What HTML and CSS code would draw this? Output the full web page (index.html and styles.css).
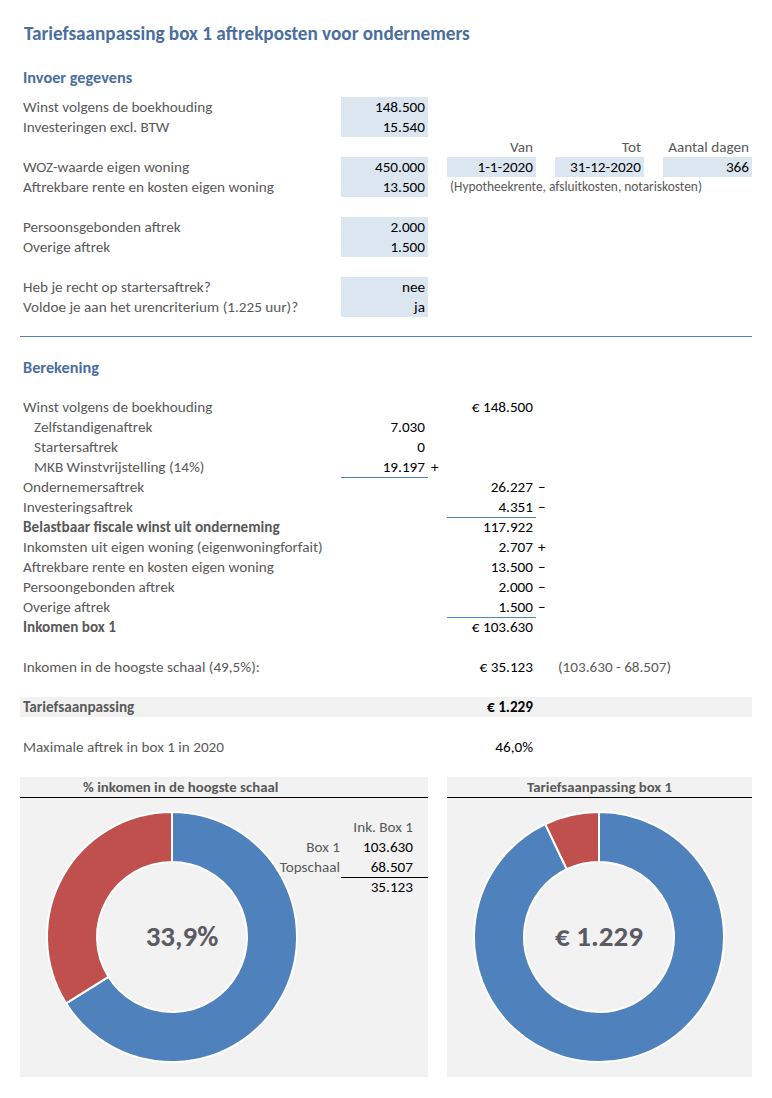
FILE: index.html
```html
<!DOCTYPE html>
<html lang="nl">
<head>
<meta charset="utf-8">
<title>Tariefsaanpassing box 1</title>
<link rel="stylesheet" href="styles.css">
</head>
<body>
<div class="sheet">
  <h1 class="title">Tariefsaanpassing box 1 aftrekposten voor ondernemers</h1>
  <div class="row head first"><div class="b">Invoer gegevens</div></div>
  <div class="rows">
    <div class="row"><div class="b">Winst volgens de boekhouding</div><div class="c num in">148.500</div></div>
    <div class="row"><div class="b">Investeringen excl. BTW</div><div class="c num in">15.540</div></div>
    <div class="row"><div class="e num muted">Van</div><div class="g num muted">Tot</div><div class="i num muted">Aantal dagen</div></div>
    <div class="row"><div class="b">WOZ-waarde eigen woning</div><div class="c num in">450.000</div><div class="e num in">1-1-2020</div><div class="g num in">31-12-2020</div><div class="i num in">366</div></div>
    <div class="row"><div class="b">Aftrekbare rente en kosten eigen woning</div><div class="c num in">13.500</div><div class="e-i small">(Hypotheekrente, afsluitkosten, notariskosten)</div></div>
    <div class="row"></div>
    <div class="row"><div class="b">Persoonsgebonden aftrek</div><div class="c num in">2.000</div></div>
    <div class="row"><div class="b">Overige aftrek</div><div class="c num in">1.500</div></div>
    <div class="row"></div>
    <div class="row"><div class="b">Heb je recht op startersaftrek?</div><div class="c num in">nee</div></div>
    <div class="row"><div class="b">Voldoe je aan het urencriterium (1.225 uur)?</div><div class="c num in">ja</div></div>
    <div class="row sep"></div>
    <div class="row"></div>
    <div class="row head"><div class="b">Berekening</div></div>
    <div class="row"></div>
    <div class="row"><div class="b">Winst volgens de boekhouding</div><div class="e num">€ 148.500</div></div>
    <div class="row"><div class="b indent">Zelfstandigenaftrek</div><div class="c num">7.030</div></div>
    <div class="row"><div class="b indent">Startersaftrek</div><div class="c num">0</div></div>
    <div class="row"><div class="b indent">MKB Winstvrijstelling (14%)</div><div class="c num ul">19.197</div><div class="d sign">+</div></div>
    <div class="row"><div class="b">Ondernemersaftrek</div><div class="e num">26.227</div><div class="f sign">−</div></div>
    <div class="row"><div class="b">Investeringsaftrek</div><div class="e num ul">4.351</div><div class="f sign">−</div></div>
    <div class="row"><div class="b bold">Belastbaar fiscale winst uit onderneming</div><div class="e num">117.922</div></div>
    <div class="row"><div class="b">Inkomsten uit eigen woning (eigenwoningforfait)</div><div class="e num">2.707</div><div class="f sign">+</div></div>
    <div class="row"><div class="b">Aftrekbare rente en kosten eigen woning</div><div class="e num">13.500</div><div class="f sign">−</div></div>
    <div class="row"><div class="b">Persoongebonden aftrek</div><div class="e num">2.000</div><div class="f sign">−</div></div>
    <div class="row"><div class="b">Overige aftrek</div><div class="e num ul">1.500</div><div class="f sign">−</div></div>
    <div class="row"><div class="b bold">Inkomen box 1</div><div class="e num">€ 103.630</div></div>
    <div class="row"></div>
    <div class="row"><div class="b">Inkomen in de hoogste schaal (49,5%):</div><div class="e num">€ 35.123</div><div class="g-i muted">(103.630 - 68.507)</div></div>
    <div class="row"></div>
    <div class="row band"><div class="b bold">Tariefsaanpassing</div><div class="e num strong">€ 1.229</div></div>
    <div class="row"></div>
    <div class="row"><div class="b">Maximale aftrek in box 1 in 2020</div><div class="e num">46,0%</div></div>
    <div class="row"></div>
  </div>

  <div class="charts">
    <section class="panel panel-left">
      <div class="ptitle ptitle-left">% inkomen in de hoogste schaal</div>
      <div class="ptable">
        <div class="prow"><div class="plbl"></div><div class="pval muted">Ink. Box 1</div></div>
        <div class="prow"><div class="plbl">Box 1</div><div class="pval">103.630</div></div>
        <div class="prow"><div class="plbl">Topschaal</div><div class="pval pul">68.507</div></div>
        <div class="prow"><div class="plbl"></div><div class="pval">35.123</div></div>
      </div>
      <svg class="donut" width="250" height="250" viewBox="0 0 250 250">
        <path class="seg-blue" d="M125,0 A125,125 0 1 1 19.04,191.31 L61.42,164.79 A75,75 0 1 0 125,50 Z"/>
        <path class="seg-red" d="M19.04,191.31 A125,125 0 0 1 125,0 L125,50 A75,75 0 0 0 61.42,164.79 Z"/>
        <text class="dlabel" x="135" y="134" text-anchor="middle">33,9%</text>
      </svg>
    </section>
    <section class="panel panel-right">
      <div class="ptitle ptitle-right">Tariefsaanpassing box 1</div>
      <svg class="donut" width="250" height="250" viewBox="0 0 250 250">
        <path class="seg-blue" d="M125,0 A125,125 0 1 1 71.29,12.12 L92.77,57.27 A75,75 0 1 0 125,50 Z"/>
        <path class="seg-red" d="M71.29,12.12 A125,125 0 0 1 125,0 L125,50 A75,75 0 0 0 92.77,57.27 Z"/>
        <text class="dlabel" x="125" y="134" text-anchor="middle">€ 1.229</text>
      </svg>
    </section>
  </div>
</div>
</body>
</html>
```

FILE: styles.css
```css
* { box-sizing: border-box; }
body {
  margin: 0;
  background: #fff;
  font-family: "Carlito", "Lato", "Liberation Sans", sans-serif;
  font-size: 15.2px;
  color: #595959;
}
.sheet {
  padding-left: 20px;
  width: 752px;
}
.title {
  margin: 0;
  padding: 23px 0 0 4px;
  height: 67px;
  line-height: 22px;
  font-size: 19.2px;
  font-weight: 700;
  color: #4a6ea0;
}
.row {
  display: grid;
  grid-template-columns: 321px 87px 19px 89px 19px 89px 19px 89px;
  height: 20px;
  line-height: 20px;
}
.row.first { margin-bottom: 10px; }
.row.head .b { font-weight: 700; color: #4a6ea0; font-size: 16.3px; }
.row > div { padding: 0 3px; white-space: nowrap; }
.b { grid-column: 1; }
.c { grid-column: 2; }
.d { grid-column: 3; }
.e { grid-column: 4; }
.f { grid-column: 5; }
.g { grid-column: 6; }
.i { grid-column: 8; }
.e-i { grid-column: 4 / 9; }
.g-i { grid-column: 6 / 9; }
.row > .indent { padding-left: 14px; }
.num { text-align: right; color: #000; }
.num.muted, .muted { color: #595959; }
.in { background: #dce6f1; }
.ul { border-bottom: 1px solid #4f81bd; }
.row > .sign { color: #000; padding-left: 3px; }
.row > .f.sign { padding-left: 2px; }
.small { font-size: 13.4px; color: #595959; }
.bold { font-weight: 700; }
.strong { font-weight: 700; }
.sep { border-bottom: 1px solid #4f81bd; }
.band { background: #f2f2f2; }

.charts {
  display: flex;
  gap: 19px;
}
.panel {
  position: relative;
  height: 300px;
  background: #f2f2f2;
}
.panel-left { width: 408px; }
.panel-right { width: 305px; }
.ptitle {
  height: 21px;
  line-height: 21px;
  border-bottom: 1px solid #000;
  font-size: 14.8px;
  font-weight: 700;
  color: #595959;
  white-space: nowrap;
}
.ptitle-left { padding-left: 63px; }
.ptitle-right { text-align: center; }
.ptable { margin-top: 19px; position: relative; z-index: 1; }
.prow {
  display: grid;
  grid-template-columns: 321px 87px;
  height: 20px;
  line-height: 20px;
}
.plbl { text-align: right; padding-right: 1px; color: #595959; white-space: nowrap; }
.pval { text-align: right; padding-right: 15px; color: #000; white-space: nowrap; }
.pval.muted { color: #595959; }
.pul { border-bottom: 1px solid #000; }
.donut {
  position: absolute;
  left: 27px;
  top: 35px;
  overflow: visible;
}
.seg-blue { fill: #4f81bd; stroke: #fff; stroke-width: 2; stroke-linejoin: round; }
.seg-red { fill: #c0504d; stroke: #fff; stroke-width: 2; stroke-linejoin: round; }
.dlabel {
  font-family: "Carlito", "Lato", "Liberation Sans", sans-serif;
  font-size: 29px;
  font-weight: 700;
  fill: #5a5a64;
}
```
